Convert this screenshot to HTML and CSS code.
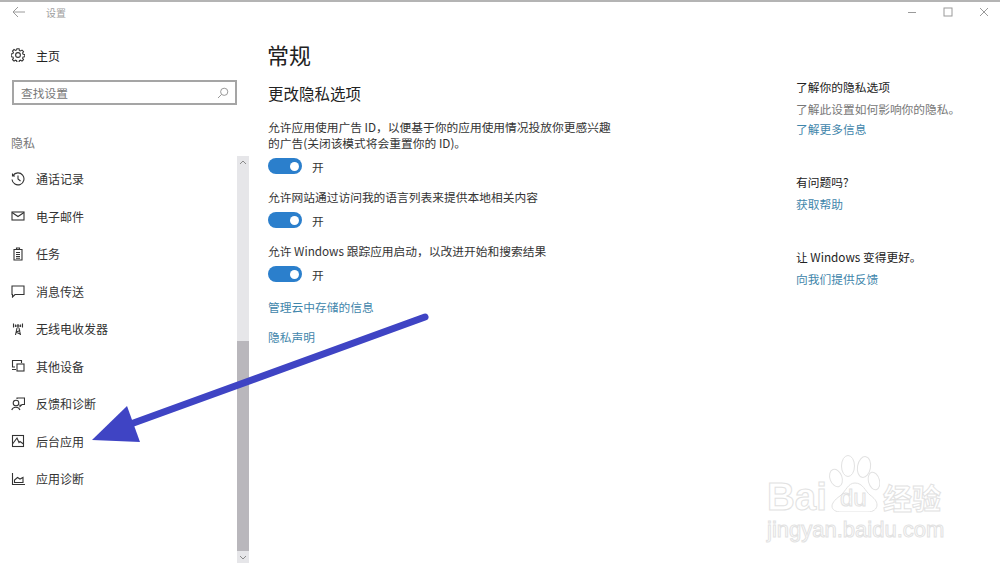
FILE: index.html
```html
<!DOCTYPE html>
<html lang="zh-CN">
<head>
  <meta charset="UTF-8">
  <title>设置</title>
  <link rel="stylesheet" href="styles.css">
</head>
<body>

<div class="window">
  <!-- Title bar -->
  <header class="titlebar">
    <svg class="back-icon" width="14" height="12" viewBox="0 0 14 12"><path d="M6 1 1 6l5 5M1 6h12"/></svg>
    <span class="app-title">设置</span>
    <div class="window-btns">
      <svg width="10" height="10" viewBox="0 0 10 10"><path d="M1 5.500h8"/></svg>
      <svg width="10" height="10" viewBox="0 0 10 10"><rect x="1" y="1" width="8" height="8"/></svg>
      <svg width="10" height="10" viewBox="0 0 10 10"><path d="M1 1l8 8M9 1 1 9"/></svg>
    </div>
  </header>

  <div class="content">
    <!-- Left navigation -->
    <aside class="sidebar">
      <div class="home-row">
        <svg class="nav-icon" width="14" height="14" viewBox="0 0 14 14"><path d="M5.900.8h2.200l.3 1.700 1.100.5 1.500-.9 1.500 1.500-.9 1.500.5 1.100 1.700.3v2.200l-1.700.3-.5 1.100.9 1.500-1.500 1.500-1.500-.9-1.100.5-.3 1.700H5.900l-.3-1.700-1.100-.5-1.500.9-1.500-1.500.9-1.500-.5-1.100-1.700-.3V5.900l1.700-.3.5-1.100-.9-1.500 1.500-1.500 1.500.9 1.100-.5z"/><circle cx="7" cy="7" r="2.400"/></svg>
        <span>主页</span>
      </div>
      <div class="search-box">
        <span>查找设置</span>
        <svg width="12" height="12" viewBox="0 0 12 12"><circle cx="7.200" cy="4.800" r="3.600"/><path d="M4.600 7.400 1 11"/></svg>
      </div>
      <div class="section-label">隐私</div>

      <div class="nav-wrap">
        <nav class="nav-list">
          <a class="nav-item">
            <svg class="nav-icon" width="14" height="14" viewBox="0 0 14 14"><path d="M2 3.500A6 6 0 1 1 1 7.500M1.500 1.500v2.500H4M7 3.500V7l2.500 2"/></svg>
            通话记录
          </a>
          <a class="nav-item">
            <svg class="nav-icon" width="14" height="14" viewBox="0 0 14 14"><rect x="1" y="3" width="12" height="8"/><path d="M1 3.500l6 4 6-4"/></svg>
            电子邮件
          </a>
          <a class="nav-item">
            <svg class="nav-icon" width="14" height="14" viewBox="0 0 14 14"><path d="M3 2.500h8v10.500H3zM5.500 2.500V1h3v1.500M5 5.500h4M5 7.500h4M5 9.500h4M5 11.200h4"/></svg>
            任务
          </a>
          <a class="nav-item">
            <svg class="nav-icon" width="14" height="14" viewBox="0 0 14 14"><path d="M1 2h12v8.500H4L1.500 13V10.500H1z"/></svg>
            消息传送
          </a>
          <a class="nav-item">
            <svg class="nav-icon" width="14" height="14" viewBox="0 0 14 14"><path d="M6 6 4.500 13M8 6l1.500 7M5.300 10l3.900-1.500M4.800 10 9 12M2.500 1.500v4M11.500 1.500v4M4.400 2.500v2.500M9.600 2.500v2.500"/><circle cx="7" cy="4" r="1.100"/></svg>
            无线电收发器
          </a>
          <a class="nav-item">
            <svg class="nav-icon" width="14" height="14" viewBox="0 0 14 14"><path d="M4 8H1.500V1.500h9V4M1 10.500h4"/><rect x="6" y="5" width="7" height="7"/></svg>
            其他设备
          </a>
          <a class="nav-item">
            <svg class="nav-icon" width="14" height="14" viewBox="0 0 14 14"><path d="M6 2V1h7.500v6.500H11L9 9.500V7.500"/><circle cx="5" cy="6" r="2.800"/><path d="M.7 13a4.500 4.500 0 0 1 8.300 0"/></svg>
            反馈和诊断
          </a>
          <a class="nav-item">
            <svg class="nav-icon" width="14" height="14" viewBox="0 0 14 14"><rect x="1.500" y="1.500" width="11" height="11"/><path d="M1.500 10 6 4l2 4.500 1-1 3.500 2.500"/></svg>
            后台应用
          </a>
          <a class="nav-item">
            <svg class="nav-icon" width="14" height="14" viewBox="0 0 14 14"><path d="M1.500 1v11.500H14M3.500 10.500V8l3-2.500 2.500 1.500 3-1.500v5z"/></svg>
            应用诊断
          </a>
        </nav>
        <div class="scrollbar">
          <svg class="scroll-arrow" width="12" height="13" viewBox="0 0 12 13"><path d="M3 8l3-3 3 3"/></svg>
          <div class="scroll-space"></div>
          <div class="scroll-thumb"></div>
          <svg class="scroll-arrow" width="12" height="12" viewBox="0 0 12 12"><path d="M3 5l3 3 3-3"/></svg>
        </div>
      </div>
    </aside>

    <!-- Main settings -->
    <main class="main">
      <h1>常规</h1>
      <h2>更改隐私选项</h2>

      <div class="option">
        <p>允许应用使用广告 ID，以便基于你的应用使用情况投放你更感兴趣的广告(关闭该模式将会重置你的 ID)。</p>
        <div class="toggle-row"><span class="toggle"><i></i></span>开</div>
      </div>
      <div class="option">
        <p>允许网站通过访问我的语言列表来提供本地相关内容</p>
        <div class="toggle-row"><span class="toggle"><i></i></span>开</div>
      </div>
      <div class="option">
        <p>允许 Windows 跟踪应用启动，以改进开始和搜索结果</p>
        <div class="toggle-row"><span class="toggle"><i></i></span>开</div>
      </div>

      <a class="link manage-link">管理云中存储的信息</a>
      <a class="link">隐私声明</a>
    </main>

    <!-- Right help column -->
    <aside class="help">
      <section class="help-block">
        <h3>了解你的隐私选项</h3>
        <p>了解此设置如何影响你的隐私。</p>
        <a class="link">了解更多信息</a>
      </section>
      <section class="help-block">
        <h3>有问题吗?</h3>
        <a class="link">获取帮助</a>
      </section>
      <section class="help-block">
        <h3>让 Windows 变得更好。</h3>
        <a class="link">向我们提供反馈</a>
      </section>
    </aside>
  </div>

  <!-- Arrow drawn over the screenshot -->
  <svg class="arrow" width="1000" height="563" viewBox="0 0 1000 563">
    <path class="arrow-line" d="M425 317 128 425"/>
    <path class="arrow-head" d="M92 440 127 406 140 442z"/>
  </svg>

  <!-- Watermark -->
  <div class="watermark">
    <div class="wm-top">
      <span class="wm-bai">Bai</span>
      <div class="wm-paw">
        <svg width="52" height="57" viewBox="0 0 52 57">
          <ellipse cx="8" cy="23" rx="6" ry="9" transform="rotate(-20 8 23)"/>
          <ellipse cx="20" cy="11" rx="6.500" ry="10.500"/>
          <ellipse cx="36" cy="12" rx="6.500" ry="10.500" transform="rotate(10 36 12)"/>
          <ellipse cx="46" cy="26" rx="5.500" ry="9" transform="rotate(-15 46 26)"/>
          <path d="M27 28c-7 0-9 8-15 13-6 4-8 8-8 10 0 4 4 6 9 6h27c5 0 9-3 9-7s-3-7-7-10c-5-4-7-12-15-12z"/>
        </svg>
        <span class="wm-du">du</span>
      </div>
      <span class="wm-jy">经验</span>
    </div>
    <div class="wm-url">jingyan.baidu.com</div>
  </div>
</div>

</body>
</html>
```

FILE: styles.css
```css
* { box-sizing: border-box; }
html, body { margin: 0; height: 100%; overflow: hidden; }
body { font-family: "Noto Sans CJK SC", "Liberation Sans", sans-serif; font-size: 12px; color: #333; background: white; }

.window { position: relative; width: 1000px; height: 563px; border-top: 2px solid #b4b4b4; }

.titlebar { height: 20px; display: flex; align-items: center; padding: 0 0 0 12px; color: #a0a0a0; }
.titlebar svg { fill: none; stroke: #9a9a9a; stroke-width: 1; }
.app-title { margin-left: 20px; font-size: 10px; }
.window-btns { margin-left: auto; display: flex; gap: 26px; padding-right: 11px; }

.content { display: flex; height: 541px; }

.sidebar { width: 250px; flex: none; display: flex; flex-direction: column; }
.nav-icon { flex: none; fill: none; stroke: #333; stroke-width: 1.1; }
.home-row { display: flex; align-items: center; gap: 11px; height: 20px; margin: 23px 0 0 11px; color: #222; }
.search-box { display: flex; align-items: center; justify-content: space-between; width: 225px; height: 25px; margin: 15px 0 0 12px; padding: 0 6px 0 7px; border: 2px solid #a5a5a5; color: #777; font-size: 11.74px; }
.search-box svg { fill: none; stroke: #999; stroke-width: 1; }
.section-label { margin: 29px 0 0 11px; height: 18px; line-height: 18px; color: #777; }

.nav-wrap { flex: 1; display: flex; margin-top: 4px; min-height: 0; }
.nav-list { flex: 1; padding-top: 4px; }
.nav-item { display: flex; align-items: center; gap: 11px; height: 37.5px; padding-left: 11px; color: #333; }

.scrollbar { width: 12px; margin-right: 1px; background: #e6e6e9; display: flex; flex-direction: column; }
.scroll-arrow { flex: none; fill: none; stroke: #8a8a8a; stroke-width: 1; }
.scroll-space { height: 172px; }
.scroll-thumb { flex: 1; background: #b9b7bc; }

.main { width: 546px; flex: none; padding-left: 18px; font-size: 11.74px; }
.main h1 { margin: 16px 0 0 -1px; font-size: 22px; font-weight: 400; line-height: 32px; color: #222; }
.main h2 { margin: 12px 0 0; font-size: 15.5px; font-weight: 400; line-height: 22px; color: #222; }
.option { margin-top: 15px; }
.option p { margin: 0; width: 350px; line-height: 16px; }
.toggle-row { display: flex; align-items: center; gap: 10px; height: 16px; margin-top: 7px; }
.toggle { display: flex; align-items: center; justify-content: flex-end; width: 34px; height: 16px; padding-right: 3px; border-radius: 8px; background: #2b7fcc; }
.toggle i { width: 9px; height: 9px; border-radius: 50%; background: white; }

.link { display: block; color: #3f86ab; line-height: 17px; }
.manage-link { margin: 16px 0 13px; }

.help { flex: 1; font-size: 11.74px; }
.help-block { margin-bottom: 36px; }
.help-block:first-child { margin-top: 56px; }
.help h3 { margin: 0 0 5px; font-size: 11.74px; font-weight: 400; line-height: 17px; color: #222; }
.help p { margin: 0 0 3px; line-height: 17px; color: #777; }

.arrow { position: absolute; left: 0; top: -2px; pointer-events: none; }
.arrow-line { fill: none; stroke: #3f44c4; stroke-width: 7; stroke-linecap: round; }
.arrow-head { fill: #3f44c4; }

.watermark { position: absolute; left: 767px; top: 451px; color: white; }
.wm-top { display: flex; align-items: flex-end; height: 62px; }
.wm-bai { font-family: "Liberation Sans", sans-serif; font-size: 38.5px; line-height: 36px; font-weight: 700; -webkit-text-stroke: 1px #e2e2e2; }
.wm-paw { position: relative; width: 52px; height: 57px; margin: 0 0 3px 1px; }
.wm-paw svg { fill: white; stroke: #e2e2e2; stroke-width: 1; }
.wm-du { position: absolute; left: 12px; top: 31px; font-family: "Liberation Sans", sans-serif; font-size: 24px; line-height: 24px; -webkit-text-stroke: 1px #e2e2e2; }
.wm-jy { font-size: 29px; line-height: 32px; margin: 0 0 2px 3px; font-weight: 700; -webkit-text-stroke: 1px #e2e2e2; }
.wm-url { font-family: "Liberation Sans", sans-serif; font-size: 22px; line-height: 24px; margin-top: 3px; -webkit-text-stroke: 1px #e2e2e2; }
```
